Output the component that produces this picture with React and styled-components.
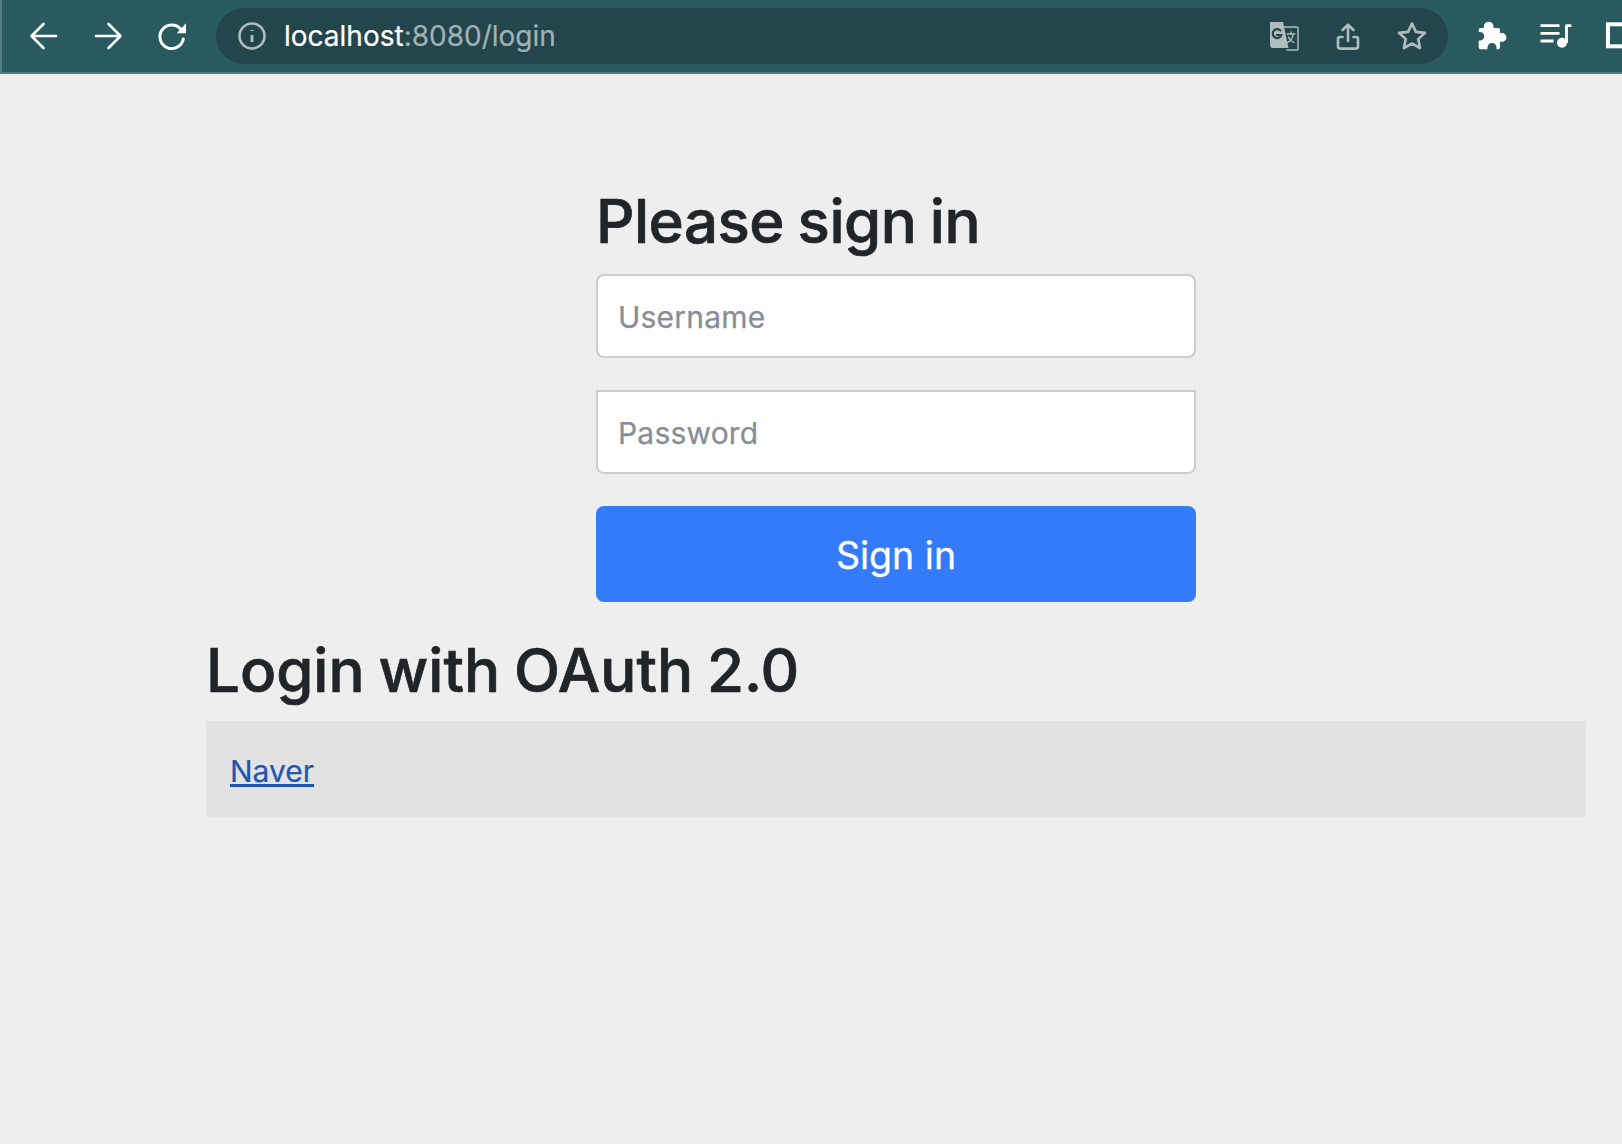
import styled, { createGlobalStyle } from 'styled-components';

const GlobalStyle = createGlobalStyle`
  html, body {
    margin: 0;
    padding: 0;
    background: #eeeeee;
    overflow: hidden;
  }
  body {
    font-family: Inter, "Noto Sans", "Liberation Sans", sans-serif;
  }
`;

const Page = styled.div`
  width: 1622px;
  height: 1144px;
  overflow: hidden;
`;

const Toolbar = styled.header`
  display: flex;
  align-items: center;
  height: 72px;
  padding-left: 10px;
  background: #295a60;
  border-bottom: 2px solid #4f7d83;
  border-left: 2px solid #4f7d83;
  box-sizing: content-box;
`;

const ToolButton = styled.button`
  flex: 0 0 64px;
  width: 64px;
  height: 56px;
  padding: 0;
  border: 0;
  background: none;
  display: flex;
  align-items: center;
  justify-content: center;
  color: ${(p) => (p.$dim ? '#b0bcbe' : '#ffffff')};
`;

const Omnibox = styled.div`
  flex: 0 0 1232px;
  height: 56px;
  margin: 0 12px;
  padding: 0 4px;
  box-sizing: border-box;
  display: flex;
  align-items: center;
  background: #22464c;
  border-radius: 28px;
`;

const Url = styled.div`
  flex: 1;
  font-size: 28px;
  -webkit-text-stroke: 0.2px;
  color: #ffffff;
  white-space: nowrap;
`;

const UrlRest = styled.span`
  color: #a0b2b5;
`;

const Main = styled.main`
  width: 1380px;
  margin-left: 206px;
  padding-top: 111px;
`;

const SignInForm = styled.form`
  width: 600px;
  margin: 0 auto;
  display: flex;
  flex-direction: column;
`;

const Heading = styled.h2`
  margin: 0 0 17px;
  font-size: 60px;
  line-height: 72px;
  font-weight: 500;
  letter-spacing: -0.5px;
  word-spacing: -2px;
  -webkit-text-stroke: 0.7px #212529;
  color: #212529;
`;

const Input = styled.input`
  display: block;
  height: 84px;
  margin-bottom: 32px;
  padding: 2px 20px 0;
  box-sizing: border-box;
  border: 2px solid #cccccc;
  border-radius: ${(p) => (p.$square ? '0 0 8px 8px' : '8px')};
  background: #ffffff;
  font-family: inherit;
  font-size: 30px;
  letter-spacing: 0.2px;
  -webkit-text-stroke: 0.25px;
  color: #212529;
  &::placeholder {
    color: #868e96;
    opacity: 1;
  }
`;

const Submit = styled.button`
  height: 96px;
  padding: 2px 0 0;
  border: 0;
  border-radius: 8px;
  background: #337bf9;
  color: #ffffff;
  font-family: inherit;
  font-size: 37.500px;
  -webkit-text-stroke: 0.3px;
`;

const OAuthTitle = styled.h2`
  margin: 32px 0 15px;
  font-size: 60px;
  line-height: 72px;
  font-weight: 500;
  letter-spacing: 0;
  word-spacing: -2px;
  -webkit-text-stroke: 0.7px #212529;
  color: #212529;
`;

const ProviderTable = styled.div`
  height: 96px;
  padding: 3px 24px 0;
  box-sizing: border-box;
  display: flex;
  align-items: center;
  background: #e2e2e2;
`;

const ProviderLink = styled.a`
  font-size: 30px;
  -webkit-text-stroke: 0.2px;
  color: #1f56ad;
  text-decoration: underline;
`;

const Icon = ({ children, fill = 'none', sw = 2.6 }) => (
  <svg width={32} height={32} viewBox="0 0 32 32" fill={fill} stroke={fill === 'none' ? 'currentColor' : 'none'} strokeWidth={sw} strokeLinecap="round" strokeLinejoin="round">
    {children}
  </svg>
);

export default function App() {
  return (
    <Page>
      <GlobalStyle />
      <Toolbar>
        <ToolButton>
          <Icon><path d="M28 16H4M15.500 4 3.500 16l12 12" /></Icon>
        </ToolButton>
        <ToolButton>
          <Icon><path d="M4 16h24M16.500 4l12 12-12 12" /></Icon>
        </ToolButton>
        <ToolButton>
          <Icon>
            <path d="M27.300 19a11.800 11.800 0 1 1-2.800-10.200" strokeWidth="3" />
            <path d="M30 3.300v10h-9.300z" fill="currentColor" stroke="none" />
          </Icon>
        </ToolButton>
        <Omnibox>
          <ToolButton $dim>
            <Icon>
              <circle cx="16" cy="16" r="12.500" />
              <path d="M16 15v7M16 10v1" strokeLinecap="butt" strokeWidth="3" />
            </Icon>
          </ToolButton>
          <Url>localhost<UrlRest>:8080/login</UrlRest></Url>
          <ToolButton $dim>
            <Icon>
              <path d="M2 2h13l5.500 26H5a3 3 0 0 1-3-3z" fill="currentColor" stroke="none" />
              <path d="M16 7h13a1 1 0 0 1 1 1v21a1 1 0 0 1-1 1H19" strokeWidth="1.500" />
              <path d="M12.500 10.500a4.500 4.500 0 1 0 1 4.500H9" stroke="#22464c" strokeWidth="2.200" />
              <path d="M19 14h8M23 12v2M25.500 14c-1 4-3 7-6 8.500M20.500 17c1 2.500 3 4.500 5.500 5.500" strokeWidth="1.300" />
            </Icon>
          </ToolButton>
          <ToolButton $dim>
            <Icon>
              <path d="M16 21V5M10.500 10 16 4.700l5.500 5.300" />
              <path d="M10.500 17H8a2 2 0 0 0-2 2v7.600a2 2 0 0 0 2 2h16a2 2 0 0 0 2-2V19a2 2 0 0 0-2-2h-2.500" />
            </Icon>
          </ToolButton>
          <ToolButton $dim>
            <Icon>
              <path d="M16 3.500l3.800 8.400 9.200 1-6.800 6.200 1.900 9L16 23.500l-8.100 4.600 1.900-9L3 12.900l9.200-1z" />
            </Icon>
          </ToolButton>
        </Omnibox>
        <ToolButton>
          <Icon fill="currentColor">
            <path d="M12.700 1.700a4.800 4.800 0 0 1 4.800 4.800V8H22a2 2 0 0 1 2 2v3h2a4.400 4.400 0 0 1 0 8.800h-2v5.500a2 2 0 0 1-2 2h-1.500v-1.800a4.500 4.500 0 0 0-9 0v1.800H4.700a2 2 0 0 1-2-2v-6.800H4a4.300 4.300 0 0 0 0-8.600H2.700V10a2 2 0 0 1 2-2h3.200V6.500a4.800 4.800 0 0 1 4.800-4.800z" />
          </Icon>
        </ToolButton>
        <ToolButton>
          <Icon>
            <path d="M.500 5.700h19M.500 13.300h19M.500 21h13" strokeLinecap="butt" strokeWidth="2.800" />
            <path d="M26.500 23V5.700h4.800" strokeLinecap="butt" strokeWidth="2.800" />
            <circle cx="22" cy="22.700" r="5" fill="currentColor" stroke="none" />
          </Icon>
        </ToolButton>
        <ToolButton>
          <Icon>
            <rect x="4" y="4.300" width="26" height="22" strokeWidth="4" strokeLinejoin="miter" />
          </Icon>
        </ToolButton>
      </Toolbar>
      <Main>
        <SignInForm onSubmit={(e) => e.preventDefault()}>
          <Heading>Please sign in</Heading>
          <Input placeholder="Username" />
          <Input type="password" placeholder="Password" $square />
          <Submit type="submit">Sign in</Submit>
        </SignInForm>
        <OAuthTitle>Login with OAuth 2.0</OAuthTitle>
        <ProviderTable>
          <ProviderLink href="#">Naver</ProviderLink>
        </ProviderTable>
      </Main>
    </Page>
  );
}
